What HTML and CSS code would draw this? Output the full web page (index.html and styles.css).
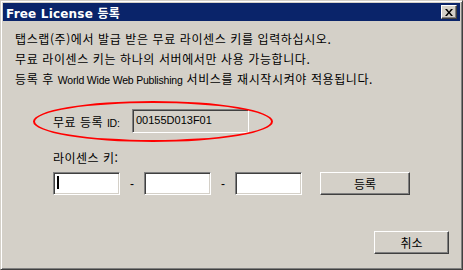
FILE: index.html
```html
<!DOCTYPE html>
<html lang="ko">
<head>
  <meta charset="UTF-8" />
  <title>Free License 등록</title>
  <link rel="stylesheet" href="styles.css">
</head>
<body>
  <div class="window">
    <div class="titlebar">
      <span class="title">Free License 등록</span>
      <button class="close-btn" aria-label="닫기">
        <svg width="8" height="7" viewBox="0 0 8 7">
          <path d="M0 0h2l2 2.5L6 0h2L5 3.5 8 7H6L4 4.5 2 7H0l3-3.5z" fill="#000"/>
        </svg>
      </button>
    </div>

    <div class="content">
      <p class="line">탭스랩(주)에서 발급 받은 무료 라이센스 키를 입력하십시오.</p>
      <p class="line">무료 라이센스 키는 하나의 서버에서만 사용 가능합니다.</p>
      <p class="line">등록 후 <span class="latin">World Wide Web Publishing</span> 서비스를 재시작시켜야 적용됩니다.</p>

      <div class="id-row">
        <span class="label">무료 등록 <span class="latin">ID:</span></span>
        <div class="field readonly">00155D013F01</div>
      </div>

      <div class="key-label">라이센스 키:</div>
      <div class="key-row">
        <div class="field key"><span class="caret"></span></div>
        <span class="dash">-</span>
        <div class="field key"></div>
        <span class="dash">-</span>
        <div class="field key"></div>
        <button class="btn register">등록</button>
      </div>

      <div class="footer">
        <button class="btn cancel">취소</button>
      </div>
    </div>
  </div>
</body>
</html>
```

FILE: styles.css
```css
body {
  margin: 0;
  font-family: "Noto Sans CJK KR", "Liberation Sans", sans-serif;
  font-size: 12px;
  color: #000;
  background-color: #d4d0c8;
}
.window {
  width: 463px;
  height: 270px;
  box-sizing: border-box;
  border: 1px solid;
  border-color: #d4d0c8 #404040 #404040 #d4d0c8;
  box-shadow: inset 1px 1px #fff, inset -1px -1px #808080;
  padding: 2px;
  background-color: #d4d0c8;
}
.titlebar {
  height: 18px;
  background-color: #0a246a;
  display: flex;
  align-items: center;
  justify-content: space-between;
  padding: 0 3px 0 3px;
}
.title {
  color: #fff;
  font-weight: 700;
  font-size: 12px;
  font-family: "DejaVu Sans", "Noto Sans CJK KR", sans-serif;
  letter-spacing: 0.2px;
}
.close-btn {
  width: 16px;
  height: 14px;
  padding: 0;
  background-color: #d4d0c8;
  border: 1px solid;
  border-color: #fff #404040 #404040 #fff;
  box-shadow: inset -1px -1px #808080;
  display: flex;
  align-items: center;
  justify-content: center;
}
.content {
  padding: 8px 11px 0 12px;
}
.line {
  margin: 0;
  height: 20px;
  line-height: 20px;
  white-space: nowrap;
  letter-spacing: 0.6px;
}
.latin {
  font-family: "Liberation Sans", sans-serif;
  font-size: 10.5px;
  letter-spacing: -0.2px;
}
.id-row {
  position: relative;
  display: flex;
  align-items: center;
  margin: 20px 0 0 38px;
  height: 24px;
}
.id-row::before {
  content: "";
  position: absolute;
  left: -20px;
  top: -8px;
  width: 240px;
  height: 41px;
  box-sizing: border-box;
  border: 2px solid #ff0000;
  border-radius: 50%;
}
.label {
  width: 79px;
  letter-spacing: 0.5px;
}
.field {
  box-sizing: border-box;
  border: 1px solid;
  border-color: #808080 #fff #fff #808080;
  box-shadow: inset 1px 1px #404040, inset -1px -1px #d4d0c8;
  background-color: #fff;
}
.field.readonly {
  width: 117px;
  height: 24px;
  background-color: #d4d0c8;
  font-family: "Liberation Sans", sans-serif;
  font-size: 11px;
  padding: 4px 0 0 3px;
}
.key-label {
  margin: 16px 0 0 38px;
  height: 18px;
  line-height: 18px;
  letter-spacing: 0.5px;
}
.key-row {
  display: flex;
  align-items: center;
  margin: 5px 0 0 38px;
}
.field.key {
  width: 67px;
  height: 23px;
  padding: 3px 0 0 3px;
}
.caret {
  display: block;
  width: 2px;
  height: 13px;
  background-color: #000;
}
.dash {
  width: 24px;
  text-align: center;
  font-family: "Liberation Sans", sans-serif;
}
.btn {
  box-sizing: border-box;
  height: 23px;
  padding: 0;
  background-color: #d4d0c8;
  border: 1px solid;
  border-color: #fff #404040 #404040 #fff;
  box-shadow: inset -1px -1px #808080;
  font-family: "Noto Sans CJK KR", sans-serif;
  font-size: 12px;
  color: #000;
}
.btn.register {
  width: 90px;
  margin-left: 18px;
}
.footer {
  display: flex;
  justify-content: flex-end;
  margin-top: 36px;
}
.btn.cancel {
  width: 75px;
}
```
